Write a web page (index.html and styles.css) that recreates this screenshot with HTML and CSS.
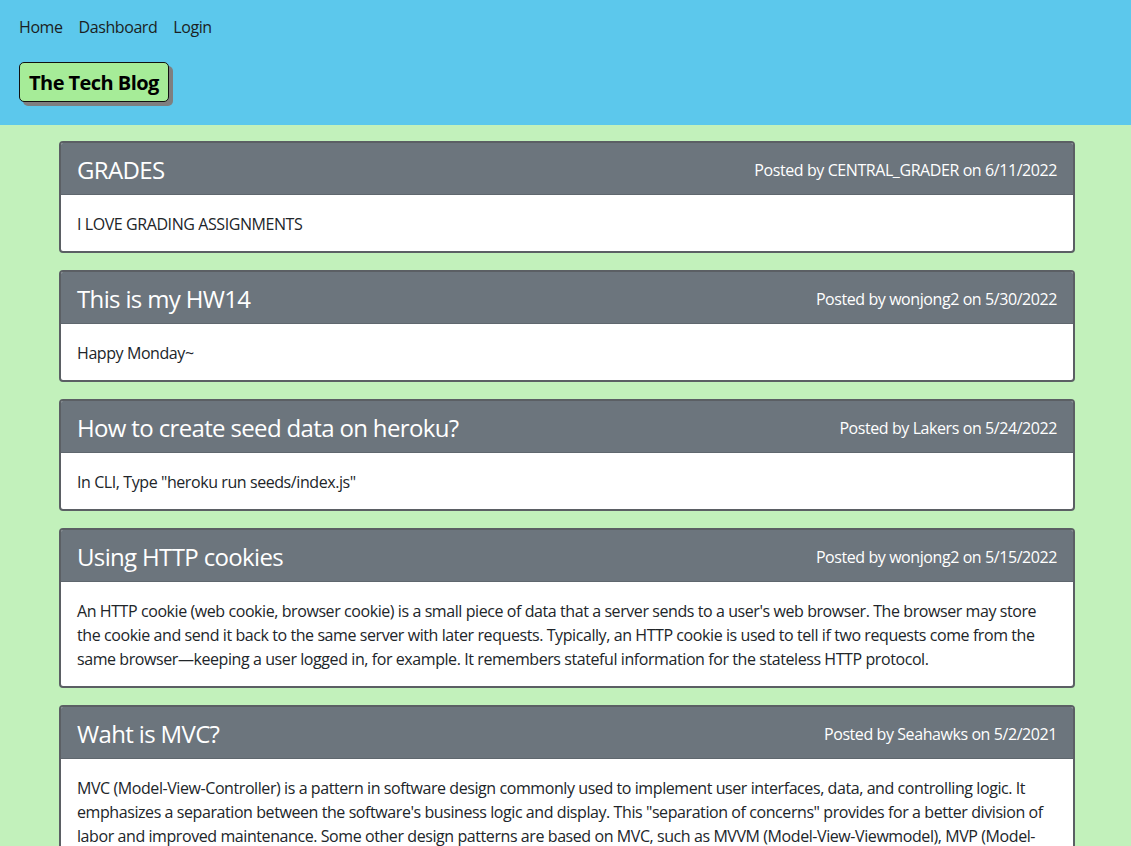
FILE: index.html
```html
<!DOCTYPE html>
<html lang="en">
<head>
<meta charset="utf-8">
<title>The Tech Blog</title>
<link rel="stylesheet" href="styles.css">
</head>
<body>
<header class="site-header">
  <nav class="nav">
    <a class="nav-link" href="#">Home</a>
    <a class="nav-link" href="#">Dashboard</a>
    <a class="nav-link" href="#">Login</a>
  </nav>
  <h1 class="brand">The Tech Blog</h1>
</header>
<main class="posts">
  <article class="post">
    <div class="post-header">
      <h2 class="post-title">GRADES</h2>
      <span class="post-meta">Posted by CENTRAL_GRADER on 6/11/2022</span>
    </div>
    <div class="post-body">I LOVE GRADING ASSIGNMENTS</div>
  </article>
  <article class="post">
    <div class="post-header">
      <h2 class="post-title">This is my HW14</h2>
      <span class="post-meta">Posted by wonjong2 on 5/30/2022</span>
    </div>
    <div class="post-body">Happy Monday~</div>
  </article>
  <article class="post">
    <div class="post-header">
      <h2 class="post-title">How to create seed data on heroku?</h2>
      <span class="post-meta">Posted by Lakers on 5/24/2022</span>
    </div>
    <div class="post-body">In CLI, Type "heroku run seeds/index.js"</div>
  </article>
  <article class="post">
    <div class="post-header">
      <h2 class="post-title">Using HTTP cookies</h2>
      <span class="post-meta">Posted by wonjong2 on 5/15/2022</span>
    </div>
    <div class="post-body">An HTTP cookie (web cookie, browser cookie) is a small piece of data that a server sends to a user's web browser. The browser may store the cookie and send it back to the same server with later requests. Typically, an HTTP cookie is used to tell if two requests come from the same browser—keeping a user logged in, for example. It remembers stateful information for the stateless HTTP protocol.</div>
  </article>
  <article class="post">
    <div class="post-header">
      <h2 class="post-title">Waht is MVC?</h2>
      <span class="post-meta">Posted by Seahawks on 5/2/2021</span>
    </div>
    <div class="post-body">MVC (Model-View-Controller) is a pattern in software design commonly used to implement user interfaces, data, and controlling logic. It emphasizes a separation between the software's business logic and display. This "separation of concerns" provides for a better division of labor and improved maintenance. Some other design patterns are based on MVC, such as MVVM (Model-View-Viewmodel), MVP (Model-View-Presenter), and MVW (Model-View-Whatever).</div>
  </article>
</main>
</body>
</html>
```
FILE: styles.css
```css
* { box-sizing: border-box; }

body {
  margin: 0;
  background: #c2f1bb;
  font-family: "Open Sans", "Noto Sans", sans-serif;
  font-size: 16px;
  line-height: 24px;
  letter-spacing: -0.42px;
  color: #212529;
}

.site-header {
  background: #5cc8ec;
  padding: 15px 19px 23px;
}

.nav {
  display: flex;
  gap: 16px;
}

.nav-link {
  color: #1b1f23;
  text-decoration: none;
}

.brand {
  display: inline-block;
  margin: 23px 0 0;
  padding: 8px 9px 6px;
  font-size: 20px;
  line-height: 24px;
  font-weight: 700;
  letter-spacing: -0.55px;
  color: #000;
  background: #a6ec98;
  border: 1px solid #111;
  border-radius: 5px;
  box-shadow: 4px 4px 0 #7f7f7f;
}

.posts {
  padding: 16px 56px 0 59px;
  display: flex;
  flex-direction: column;
  gap: 17px;
}

.post {
  border: 2px solid #5b5f64;
  border-radius: 4px;
  background: #fff;
  overflow: hidden;
}

.post-header {
  display: flex;
  justify-content: space-between;
  align-items: center;
  padding: 13px 16px 10px;
  background: #6c757d;
  color: #fff;
  border-bottom: 1px solid #5f676e;
}

.post-title {
  margin: 0;
  font-size: 24px;
  line-height: 28px;
  font-weight: 400;
  letter-spacing: -0.65px;
}

.post-meta {
  font-size: 16px;
}

.post-body {
  padding: 17px 16px 15px;
}
```
